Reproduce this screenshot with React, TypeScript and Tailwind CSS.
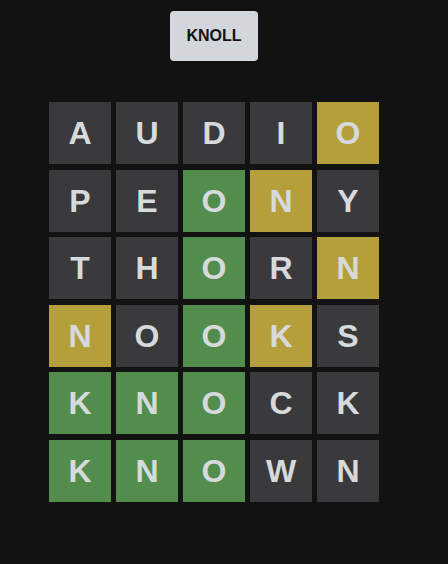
import React from 'react';

type Cell = 'g' | 'y' | 'x';

const rows: { word: string; marks: Cell[] }[] = [
  { word: 'AUDIO', marks: ['x', 'x', 'x', 'x', 'y'] },
  { word: 'PEONY', marks: ['x', 'x', 'g', 'y', 'x'] },
  { word: 'THORN', marks: ['x', 'x', 'g', 'x', 'y'] },
  { word: 'NOOKS', marks: ['y', 'x', 'g', 'y', 'x'] },
  { word: 'KNOCK', marks: ['g', 'g', 'g', 'x', 'x'] },
  { word: 'KNOWN', marks: ['g', 'g', 'g', 'x', 'x'] },
];

const tileColor: Record<Cell, string> = {
  g: 'bg-[#538d4e]',
  y: 'bg-[#b59f3b]',
  x: 'bg-[#3a3a3c]',
};

export default function App() {
  return (
    <div className="min-h-[564px] w-full bg-[#121212] font-['Liberation_Sans',Arial,sans-serif]">
      <div className="w-[428px] flex flex-col items-center pt-[11px]">
        <button className="w-[88px] h-[50px] rounded-[4px] bg-[#d3d6da] text-[#121212] text-[16px] font-bold">
          KNOLL
        </button>

        {/* board */}
        <div className="mt-[41px] grid grid-cols-5 gap-x-[5px] gap-y-[5.5px]">
          {rows.map((row, r) =>
            row.word.split('').map((ch, i) => (
              <div
                key={`${r}-${i}`}
                className={`w-[62px] h-[62px] flex items-center justify-center text-[32px] font-bold text-[#d7dadc] ${tileColor[row.marks[i]]}`}
              >
                {ch}
              </div>
            ))
          )}
        </div>
      </div>
    </div>
  );
}
